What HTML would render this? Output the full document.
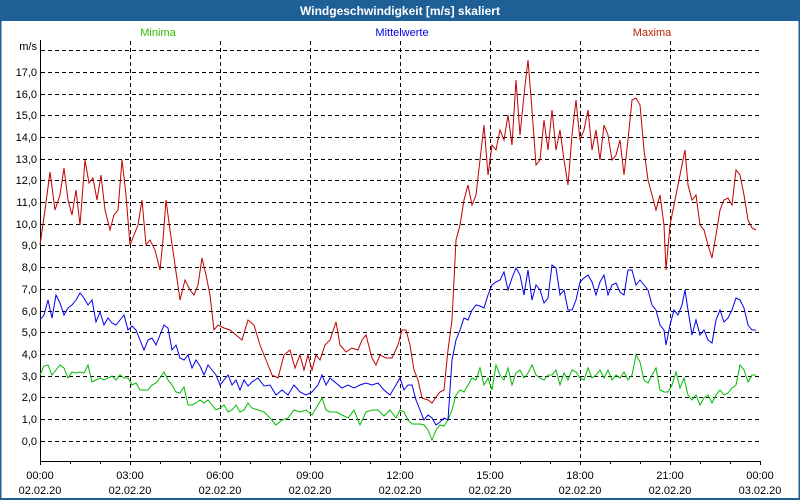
<!DOCTYPE html>
<html><head><meta charset="utf-8"><style>
html,body{margin:0;padding:0;background:#fff}
svg{display:block;font-family:"Liberation Sans",sans-serif}
</style></head><body>
<svg width="800" height="500" viewBox="0 0 800 500">
<rect x="0" y="0" width="800" height="500" fill="#fff"/>
<rect x="0" y="0" width="800" height="21" fill="#1e5f96"/>
<rect x="0" y="0" width="1.5" height="500" fill="#1e5f96"/>
<rect x="798.5" y="0" width="1.5" height="500" fill="#1e5f96"/>
<rect x="0" y="498" width="800" height="2" fill="#1e5f96"/>
<text x="400" y="15" fill="#fff" font-size="12" font-weight="bold" text-anchor="middle">Windgeschwindigkeit [m/s] skaliert</text>
<text x="158" y="36" fill="#33bb00" font-size="11" text-anchor="middle">Minima</text>
<text x="402" y="36" fill="#0000ee" font-size="11" text-anchor="middle">Mittelwerte</text>
<text x="652" y="36" fill="#bb2200" font-size="11" text-anchor="middle">Maxima</text>
<g stroke="#000" stroke-width="1" stroke-dasharray="4,3" fill="none">
<path d="M41 50.5H760M41 72.5H760M41 94.5H760M41 115.5H760M41 137.5H760M41 159.5H760M41 180.5H760M41 202.5H760M41 224.5H760M41 245.5H760M41 267.5H760M41 289.5H760M41 311.5H760M41 332.5H760M41 354.5H760M41 376.5H760M41 397.5H760M41 419.5H760M41 441.5H760"/>
<path d="M130.5 41V461M220.5 41V461M310.5 41V461M400.5 41V461M490.5 41V461M580.5 41V461M670.5 41V461"/>
</g>
<path d="M40.5 40V461.5H760.5" stroke="#000" fill="none"/>
<g stroke="#000"><path d="M40.5 461v4M70.5 461v3M100.5 461v3M130.5 461v4M160.5 461v3M190.5 461v3M220.5 461v4M250.5 461v3M280.5 461v3M310.5 461v4M340.5 461v3M370.5 461v3M400.5 461v4M430.5 461v3M460.5 461v3M490.5 461v4M520.5 461v3M550.5 461v3M580.5 461v4M610.5 461v3M640.5 461v3M670.5 461v4M700.5 461v3M730.5 461v3M760.5 461v4"/></g>
<g font-size="11" fill="#000" text-anchor="end">
<text x="37" y="50">m/s</text>
<text x="37" y="76">17,0</text><text x="37" y="98">16,0</text><text x="37" y="119">15,0</text><text x="37" y="141">14,0</text><text x="37" y="163">13,0</text><text x="37" y="184">12,0</text><text x="37" y="206">11,0</text><text x="37" y="228">10,0</text><text x="37" y="249">9,0</text><text x="37" y="271">8,0</text><text x="37" y="293">7,0</text><text x="37" y="315">6,0</text><text x="37" y="336">5,0</text><text x="37" y="358">4,0</text><text x="37" y="380">3,0</text><text x="37" y="401">2,0</text><text x="37" y="423">1,0</text><text x="37" y="445">0,0</text>
</g>
<g font-size="11" fill="#000" text-anchor="middle">
<text x="40" y="479">00:00</text><text x="40" y="494">02.02.20</text>
<text x="130" y="479">03:00</text><text x="130" y="494">02.02.20</text>
<text x="220" y="479">06:00</text><text x="220" y="494">02.02.20</text>
<text x="310" y="479">09:00</text><text x="310" y="494">02.02.20</text>
<text x="400" y="479">12:00</text><text x="400" y="494">02.02.20</text>
<text x="490" y="479">15:00</text><text x="490" y="494">02.02.20</text>
<text x="580" y="479">18:00</text><text x="580" y="494">02.02.20</text>
<text x="670" y="479">21:00</text><text x="670" y="494">02.02.20</text>
<text x="760" y="479">00:00</text><text x="760" y="494">03.02.20</text>
</g>
<g fill="none" stroke-width="1">
<polyline stroke="#00bb00" points="40,375 44,366 48,365 52,375 56,370 60,365 64,368 68,378 72,372 76,373 80,372 84,373 88,365 92,382 96,380 100,378 104,380 108,378 112,376 116,380 120,375 124,378 128,378 132,385 136,383 140,390 144,390 148,390 152,385 156,383 160,378 164,372 168,380 172,385 176,392 180,393 184,387 188,405 192,405 196,403 200,400 204,403 208,400 212,405 216,410 220,408 224,405 228,412 232,410 236,405 240,412 244,410 248,403 252,408 258,410 264,412 270,418 276,425 282,420 288,418 294,410 300,412 306,410 312,415 318,405 322,398 326,410 330,412 336,412 342,415 348,418 354,410 360,425 366,412 372,410 378,410 384,416 390,410 396,418 400,410 404,412 408,420 412,424 416,424 420,424 424,425 428,430 432,440 436,430 440,425 444,426 448,420 452,410 456,395 460,390 464,392 468,385 472,378 476,380 480,368 484,385 488,378 492,390 496,365 500,375 504,380 508,368 512,385 516,373 520,370 524,378 528,373 532,365 536,375 540,378 544,380 548,375 552,375 556,370 560,385 564,373 568,380 572,370 576,372 580,378 584,380 588,368 592,378 596,375 600,370 604,378 608,370 612,380 616,375 620,378 624,372 628,380 632,375 636,355 640,362 644,380 648,383 652,375 656,368 660,390 664,392 668,392 672,385 676,372 680,388 684,378 688,395 692,400 696,395 700,405 704,398 708,395 712,403 716,395 720,390 724,395 728,393 732,388 736,385 740,365 744,370 748,382 752,375 756,375"/>
<polyline stroke="#0000ee" points="40,320 44,315 48,300 52,318 56,295 60,303 64,315 68,308 72,305 76,300 80,293 84,298 88,305 92,300 96,322 100,312 104,325 108,318 112,323 116,325 120,320 124,315 128,330 132,326 136,330 140,340 144,350 148,340 152,338 156,345 160,335 164,325 168,328 172,350 176,345 180,358 184,360 188,355 192,368 196,360 200,366 204,375 208,365 212,370 216,375 220,385 224,380 228,375 232,385 236,380 240,390 244,380 248,386 252,382 258,378 264,386 270,385 276,395 282,390 288,395 294,385 300,392 306,395 312,392 318,385 322,375 326,385 330,378 336,383 342,388 348,385 354,388 360,385 366,383 372,385 378,383 384,390 390,395 396,385 400,378 404,390 408,385 412,385 416,400 420,410 424,420 428,415 432,418 436,425 440,422 444,418 448,420 452,360 456,340 460,330 464,318 468,320 472,310 476,305 480,306 484,308 488,295 492,285 496,282 500,280 504,272 508,290 512,278 516,268 520,275 524,295 528,270 532,300 536,285 540,290 544,303 548,298 552,265 556,268 560,295 564,290 568,310 572,310 576,300 580,282 584,278 588,275 592,282 596,295 600,282 604,275 608,295 612,285 616,283 620,292 624,295 628,270 632,270 636,285 640,280 644,285 648,290 652,305 656,310 660,325 664,330 666,345 670,325 674,310 678,315 682,305 685,290 688,310 692,335 696,320 700,335 704,330 708,340 712,343 716,320 720,310 724,322 728,318 732,310 736,298 740,300 744,308 748,325 752,330 756,330"/>
<polyline stroke="#c00000" points="40,245 45,210 50,172 55,210 60,195 64,168 68,200 72,215 76,190 80,225 85,160 89,183 93,178 97,200 101,175 105,210 110,230 114,215 118,210 122,160 126,195 130,245 134,235 138,225 142,200 146,245 150,240 155,250 160,270 163,240 166,200 170,230 175,265 180,300 185,280 190,290 194,295 198,285 202,258 206,275 210,295 214,330 218,325 224,328 230,330 236,335 242,340 248,320 254,325 260,345 266,360 272,375 278,378 284,355 290,350 295,368 300,355 304,370 308,355 312,370 316,355 320,360 325,345 330,340 336,322 340,345 346,352 352,348 358,350 362,340 366,335 372,358 376,365 380,355 386,358 392,358 398,345 402,330 406,330 410,345 414,370 418,380 422,398 428,400 432,403 436,397 440,392 444,390 448,350 452,320 456,240 460,225 464,200 468,185 472,205 476,195 480,160 484,125 488,175 492,145 496,150 500,130 504,140 508,115 512,145 516,80 520,135 524,95 528,60 532,110 536,165 540,160 544,120 548,150 552,110 556,150 560,130 564,160 568,185 572,135 576,100 580,140 584,130 588,110 592,150 596,130 600,160 604,125 608,135 612,160 616,155 620,140 624,175 628,140 632,100 636,98 640,105 644,150 648,180 652,195 656,210 660,195 664,225 666,270 670,225 674,205 678,185 682,165 685,150 688,185 692,200 696,195 700,225 704,230 708,245 712,258 716,235 720,210 724,200 728,198 732,205 736,170 740,175 744,195 748,220 752,228 756,230"/>
</g>
</svg>
</body></html>
